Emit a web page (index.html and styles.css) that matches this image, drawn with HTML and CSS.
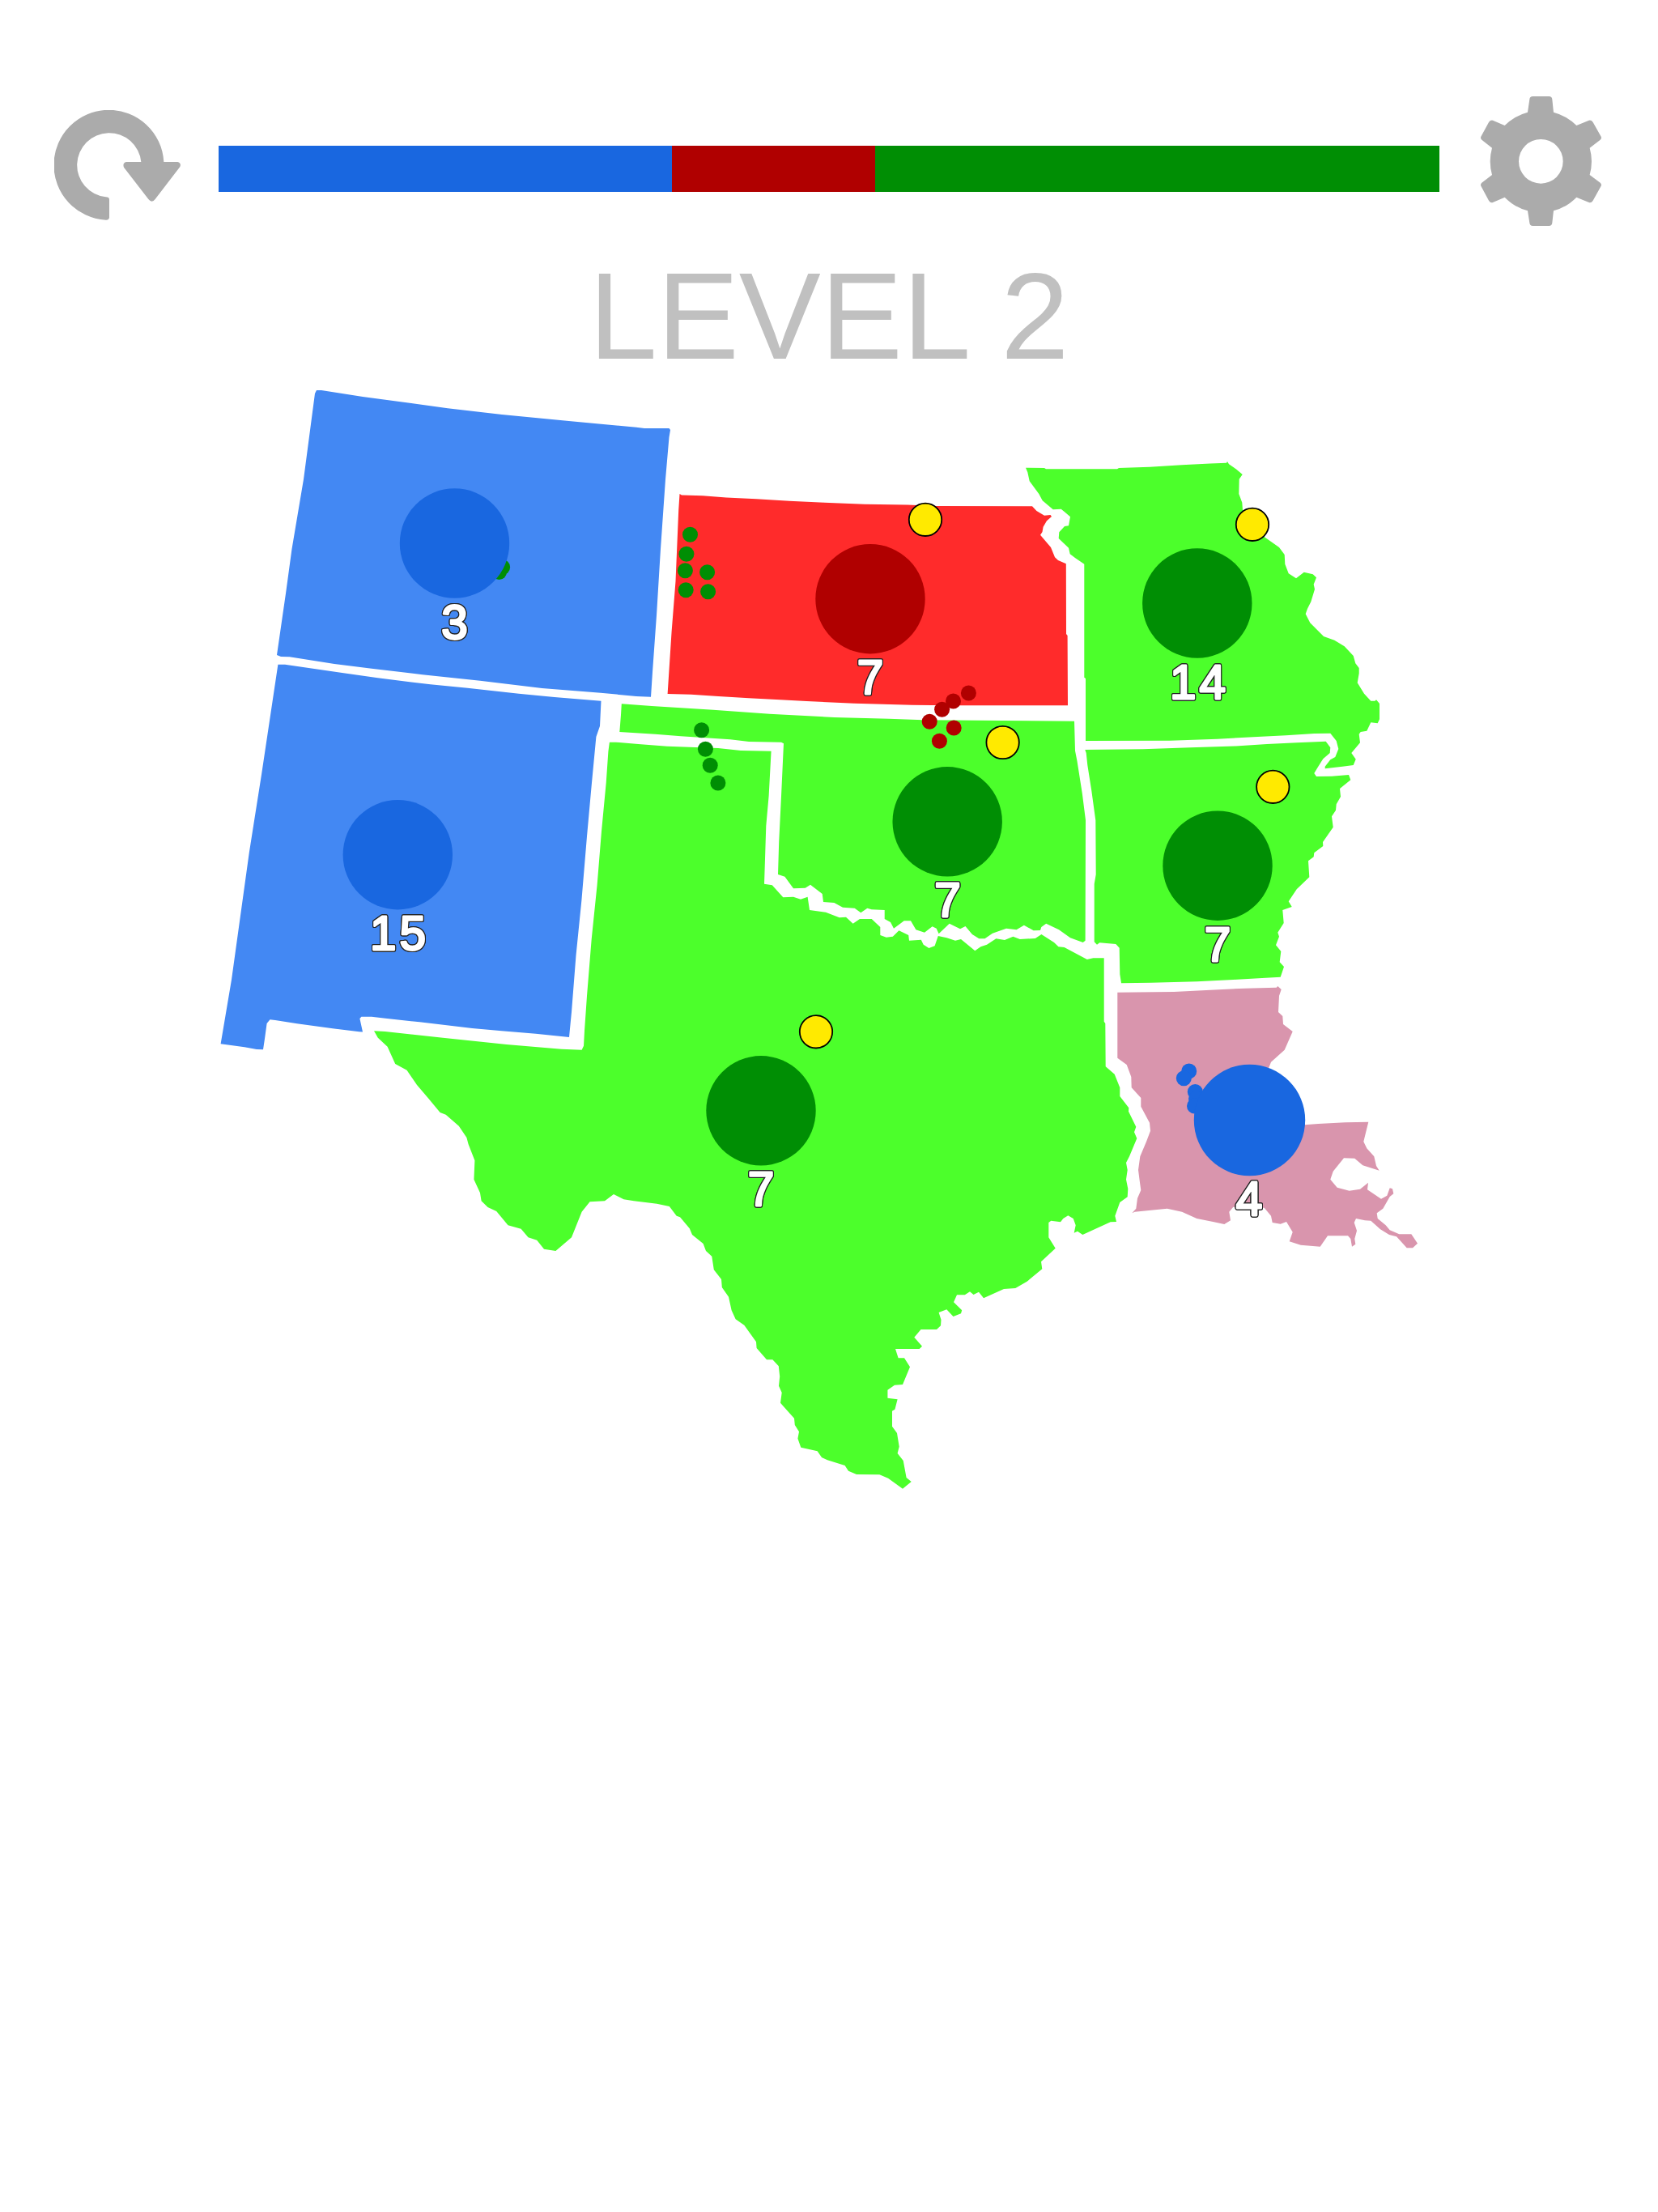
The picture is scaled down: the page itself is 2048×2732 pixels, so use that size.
FILE: index.html
```html
<!DOCTYPE html>
<html lang="en">
<head>
<meta charset="utf-8">
<title>Level 2</title>
<link rel="stylesheet" href="styles.css">
</head>
<body>
<header class="topbar">
  <button class="icon-button restart" aria-label="Restart">
    <svg viewBox="81 138 468 408" width="156" height="136"><path d="M272 545A204 204 0 1 1 487 330H538Q553 334 547 348L455 468Q443 484 430 468L339 350Q333 334 348 330H403A119 119 0 1 0 272 460Q285 460 285 470V536Q283 546 272 545Z"/></svg>
  </button>
  <div class="balance">
    <span class="share blue" style="flex-grow:560"></span>
    <span class="share red" style="flex-grow:251"></span>
    <span class="share green" style="flex-grow:697"></span>
  </div>
  <button class="icon-button settings" aria-label="Settings">
    <svg viewBox="387 87 447 480" width="149" height="160"><path fill-rule="evenodd" d="M561 146L568 98Q569 87 580 87H640Q651 87 652 98L657 146A187 187 0 0 1 742 195L788 176Q797 174 803 183L833 236Q836 243 830 248L791 278A187 187 0 0 1 791 378L830 407Q836 412 833 419L803 473Q797 483 788 480L742 461A187 187 0 0 1 657 511L652 556Q651 567 640 567H580Q569 567 568 556L561 511A187 187 0 0 1 476 461L432 480Q423 483 417 473L388 419Q385 412 391 407L429 378A187 187 0 0 1 429 278L391 248Q385 243 388 236L417 183Q423 174 432 176L476 195A187 187 0 0 1 561 146ZM692 328A82 82 0 1 0 528 328A82 82 0 1 0 692 328Z"/></svg>
  </button>
</header>
<h1 class="title">LEVEL 2</h1>
<svg class="map" viewBox="0 466 2048 2266" width="2048" height="2266">
  <g class="states">
    <path class="land-blue" d="M391 482L397 482L448 490L493 496L553 504.300L620 512L700 519.700L786 527.700L796 529L826.500 529L828 531L826.500 540L822 592L816 678L811 760L806 830L804 860.700L786 860L742 855.700L669.500 850L593 840.700L522 833.300L459 825.700L413 820L357.600 811.300L347 811L342 809L353 733L360.500 678L375 592L389 486Z"/>
    <path class="land-blue" d="M343.400 820.700L352 820.700L422.600 831L466.600 837.300L531.700 845.300L577.600 849.700L640.800 856.700L684.800 861L742.500 865.700L741 896.700L736.400 910L730.700 970L725 1033L718.400 1111.700L711.500 1180L706 1250L703 1281L661.800 1276.700L619.700 1273.300L583.300 1270L518.300 1262.300L476 1257.700L459 1255.700L446.400 1255.700L444.400 1258L448 1274.500L443.700 1274.300L411 1270.300L367 1264.300L340 1260L333.500 1259.300L329.600 1264L327 1283L325 1296.300L317 1296L302 1293.300L272.600 1289.300L286 1210L307.800 1053L323 956.700L336.500 866.700Z"/>
    <path class="land-red" d="M839.500 610L842 611.500L868 612.300L897 614.500L934 616.300L975 618.700L1018 620.700L1068 622.700L1121 623.500L1157 625L1275 625.300L1280.400 631L1290 636.700L1297.500 636L1299 638L1293 643.300L1288.600 650.700L1287.500 657L1285 660.700L1298 676L1303 688.300L1307 692L1316.800 696.300L1317 783L1318.600 785L1319 871.300H1175L1127 870.700L1055 868.700L996.400 866L959 864L925 862.300L887.500 860L853.600 857.700L824.600 857L829.600 780L834.500 718L838.200 630Z"/>
    <path class="land-green" d="M1267 577.700L1290 578L1292 579.300H1380L1382 578L1420 576.700L1460 574.300L1495 572.500L1515 571.700L1516 570L1518 573.300L1526.700 579.300L1534.700 586L1530.700 591.700L1530.300 610L1534.300 620.700L1535 630L1550 655L1563.300 664.300L1580 676L1586.700 685L1587.300 696.700L1591.700 708.300L1601 714.300L1610.700 706.700L1621.700 709.300L1626 713.300L1622.700 721.700L1624 727.700L1619.300 743.300L1615 751.700L1612.700 758.300L1618.300 769.300L1635 786L1648.300 790.700L1660.700 798.300L1671.700 810L1674.300 819.300L1678.700 825V831.700L1676.700 843.300L1685 856.700L1693.300 865.700H1698.300L1700 864.300L1704 869V888.300L1701.700 893.300L1693.300 892.300L1688.300 902.700L1680.700 904L1678.700 906.700L1680 917.300L1669.300 930L1674.700 937.700L1671.700 945L1658.300 946.700L1636.700 949.300V946.700L1643.300 938.300L1649.300 935L1653.300 925L1650.700 915L1643.300 905.700L1623.300 906L1588.300 908.300L1548.300 910.300L1503.300 912.700L1445 914.700L1341 915V838L1339.300 836.700V696.700L1328.300 689.300L1321.700 684.300L1320 676.700L1307.700 665L1308.300 657.300L1315 650L1320 649.300L1322 638.300L1315 632.300L1310.700 628.700L1300.700 629.300L1287.700 618.300L1283.300 610L1271.700 594.300L1269.300 583.300Z"/>
    <path class="land-green" d="M767.800 869.300L805 872L881 876.700L950.500 881.700L1030.400 886L1098 887.700L1140 889.300L1327 890.700L1328 927.300L1330.500 940L1336.800 980L1341 1013L1340.600 1161.700L1337.700 1164L1322 1158.300L1308 1148.300L1292.200 1140.700L1286.300 1145L1285 1149L1276.600 1149.300L1264.900 1142.700L1255.600 1148.300L1243 1146.700L1226 1152.700L1216.500 1159.300H1209.300L1200.900 1154L1192.500 1144L1186 1147.300L1172.700 1140.700L1159.600 1153.300L1156.700 1146.700L1151.600 1144.300L1142 1151.700L1131.400 1148.300L1125 1137.300H1116.700L1104 1146.700L1100 1139L1092.700 1135V1124L1076.700 1123.300L1071.300 1121.700L1063.300 1127.300L1055.700 1121.700L1041 1120.700L1030.400 1115L1017 1114L1015.700 1104L1001 1092.700L994.700 1096.700L980 1097.300L969.400 1082.700L961 1080L962.200 1040L965 983.300L968 918.300L965 916.700L925 916L902 913.300L841 909.300L809.500 906.700L765.300 904L767 883Z"/>
    <path class="land-green" d="M752.900 916.700H761L788.400 919L824 921.700L887 924L915 927L952.600 927.700L949.600 983.300L946.300 1020L944 1091.700L953.800 1093.300L967.300 1108.300L980 1107.700L989 1110.700L997.600 1107.700L1000 1124L1020 1126.700L1036.800 1133.300L1045 1132.700L1053.600 1140.700L1062 1135H1076.700L1087.300 1145V1155L1094.800 1157.700L1102.800 1156.700L1110.400 1149.300L1122.200 1155L1123 1161.700L1137.800 1160.700L1140.700 1166.700L1147.400 1171L1154.600 1168.300L1158.800 1156L1169.400 1158.300L1180 1161.700L1187 1160L1204.300 1174.300L1211.400 1169.300L1219 1166.700L1230.400 1159.300L1241 1161L1251.400 1156.700L1259.800 1160L1278.800 1159L1286.400 1154L1302 1164L1307.400 1169.300L1314.600 1170L1342.800 1185L1350.400 1183.300H1363.700V1261.700L1365.300 1264L1365.700 1317.300L1376.700 1326.700L1383.300 1343.300V1354L1394.300 1368.300L1394 1372.700L1403.300 1391.700L1401 1398.300L1404.300 1406L1395 1428.300L1391 1436L1392.700 1445L1391 1456.700L1393.300 1468.300L1392.700 1478.300L1383.300 1485L1377.300 1501.700L1379 1509L1371.700 1509.300L1337.300 1525L1331 1520.700L1326.700 1522.700L1328.700 1513.300L1325.700 1505L1319.300 1501.300L1313.300 1505L1310 1509.300L1298.300 1507.700L1295.300 1510V1528.300L1303.700 1541.700L1286 1558.300L1287.300 1567.300L1268.600 1582.700L1254.300 1591L1240 1592L1215 1603.300L1209 1595.700L1202.500 1599L1198 1595.300L1191.800 1599.300H1182L1178 1608.300L1188.200 1618.300L1187 1622.300L1177.500 1626L1169.300 1617.300L1159.600 1621L1162.500 1630L1162 1637.300L1157 1642H1137.500L1129.300 1651.700L1139 1662.700L1135.700 1666H1106L1109.600 1677.300H1117L1124 1688.300L1115 1710L1105 1710.700L1096.400 1716.700V1726.700L1108.600 1728.300L1105.400 1740.700L1102 1742.700V1761.700L1108 1770L1110.700 1786.700L1108.600 1795L1115.700 1804L1119.600 1825L1125.700 1830L1115 1838.700L1097 1825.700L1086.400 1821.300L1058 1821L1048 1816.700L1043.600 1810L1022 1803.300L1015 1800L1009.600 1792.300L989.300 1787.700L985.400 1776.700L987 1768.300L981.800 1760L981 1751.700L972 1741.700L964 1732.700L965.700 1720L962 1711.700L963.200 1700L961.800 1687.300L954.300 1679.300H947L934.600 1665L934 1657.300L919.300 1636.700L908.600 1629.300L903.600 1618.300L900 1601.700L891.800 1590L891 1580L881.800 1568.300L879.300 1551.700L872 1545L868.600 1536L855 1525L851.800 1517.300L840 1503.300L835.700 1501.700L826.800 1490L811.400 1486.700L783 1483.300L770.400 1481.300L758 1475L747 1483.300L728.600 1484.300L718.600 1496.700L706 1528.300L686.400 1545L672 1542.700L663.200 1531.700L652.500 1528.300L643.600 1517.700L627.500 1513.300L613.200 1496L602.500 1491L594.600 1483.300L593 1473.300L585.400 1456.700L586.400 1433.300L578.600 1413.300L576.400 1405L566.800 1390.700L550.700 1376.700L543.600 1374L529.300 1356.700L515 1340L502.500 1321.700L488.200 1314L478.600 1292.700L466.800 1281.700L462 1273.300L475.700 1274L547 1281.700L625.700 1290L693.600 1295.700L718.600 1296.700L721 1291.700L722 1273L725 1230L730.700 1160L737.600 1093L743 1026.700L748.700 966.700L751.400 928Z"/>
    <path class="land-green" d="M1340.300 926L1411.700 925.300L1470 923.300L1526.700 921.500L1565 919L1601.700 917.300L1637.700 915.700L1643.300 923.300L1642.700 930L1634.300 937.300L1628.300 946.700L1623.300 955L1626 959L1645 958.700L1666 957L1668.300 963.300L1655 974L1656 984L1650.700 993.300L1650 1000.700L1645 1008.300L1646.700 1021.700L1634 1040L1634.300 1045L1623.300 1053.300L1622.700 1058.300L1616 1063.300L1617.300 1083.300L1601.700 1098.300L1591.700 1113.300L1595.700 1120L1584.300 1124L1585.700 1140L1578.300 1151.700L1580 1156.700L1576 1167.300L1582.300 1175L1580.700 1188.300L1586 1194L1581.700 1206.700L1563.300 1207.700L1523.300 1210L1478.300 1212.300L1421.700 1213.700L1385 1214.300L1383.300 1203.300L1382.700 1170.700L1378.300 1166L1358.300 1164.300L1355 1166.700L1351.700 1163.300V1091.700L1353.700 1080L1353.300 1013.300L1348.300 976.700L1343.300 945L1341.700 930Z"/>
    <path class="land-pink" d="M1380.300 1225.700L1450 1225L1495 1222.700L1538.300 1220.700L1576.700 1219.700L1578.300 1218L1582.700 1222L1580 1230L1579 1250L1584.300 1255L1585 1265L1596.700 1274L1586.700 1296.700L1570 1311.700L1566 1322L1580 1389L1611.700 1389.300L1628.300 1388L1661.700 1386.300L1690.300 1385.700L1684.300 1410L1688.300 1418.300L1697.300 1428.300L1700 1440L1703.700 1445.700L1683.300 1439.300L1673.300 1430.700L1660 1430.300L1646.700 1446.700L1643.300 1456.700L1651.700 1466.700L1666.700 1470.700L1680 1468.700L1690 1460.700L1689 1469.300L1706 1480.700L1713.300 1476.700L1716.700 1467.300L1720 1468.300L1721.300 1474.300L1716.700 1478L1708.300 1492.700L1700.700 1498.300L1701.700 1505L1711.700 1513.300L1716.700 1519.300L1728.300 1524.300H1743.300L1751 1535.700L1745 1541.300H1737.700L1725 1527.300L1716 1525L1705 1518.300L1693.300 1507.700L1686 1507.300L1675 1505L1672.700 1510L1676 1520L1673.300 1530L1674.300 1536.700L1670 1539.700L1668.300 1530L1665 1526.300H1640L1630.700 1539.700L1606.700 1537.700L1592.700 1533.300L1596.700 1521.700L1589 1509L1581.700 1511.700L1571.700 1510L1570 1501.700L1561.700 1491.700L1523.300 1490.700L1518.300 1496.700L1520 1507.300L1512.300 1512L1498.300 1509L1478.300 1505L1460 1496.700L1441.700 1492.700L1401.700 1496.700L1398.300 1498.300L1403.300 1492.700L1405 1480L1409.300 1470L1407.700 1458.300L1406 1445L1408.300 1428.300L1416 1410L1421 1396.700L1420 1386.700L1409.300 1366.700V1356L1397.700 1343.300L1397.300 1330L1391.700 1315L1380.300 1306.700Z"/>
  </g>
  <g class="green">
    <circle cx="620.600" cy="700.500" r="9.500"/><circle cx="616.500" cy="706.500" r="9.500"/>
    <circle cx="852.500" cy="660.300" r="9.500"/><circle cx="847.900" cy="684.300" r="9.500"/>
    <circle cx="846.400" cy="704.700" r="9.500"/><circle cx="873.600" cy="706.700" r="9.500"/>
    <circle cx="847.200" cy="728.700" r="9.500"/><circle cx="874.600" cy="730.700" r="9.500"/>
    <circle cx="866.600" cy="901.700" r="9.500"/><circle cx="871.400" cy="925.300" r="9.500"/>
    <circle cx="877.200" cy="945.300" r="9.500"/><circle cx="886.900" cy="967" r="9.500"/>
  </g>
  <g class="red">
    <circle cx="1196.400" cy="856" r="9.500"/><circle cx="1177.500" cy="866" r="9.500"/><circle cx="1163.600" cy="876.300" r="9.500"/>
    <circle cx="1148.200" cy="891.300" r="9.500"/><circle cx="1178.200" cy="899" r="9.500"/><circle cx="1160.400" cy="915.300" r="9.500"/>
  </g>
  <g class="blue">
    <circle cx="1468.700" cy="1323" r="9.500"/><circle cx="1462.300" cy="1331.700" r="9.500"/>
    <circle cx="1476.300" cy="1348.500" r="9.500"/><circle cx="1477.500" cy="1357" r="9.500"/><circle cx="1475.500" cy="1366" r="9.500"/>
    <circle cx="561.500" cy="671" r="67.700"/>
    <circle cx="491.300" cy="1055.700" r="67.700"/>
    <circle cx="1543.500" cy="1383.500" r="68.700"/>
  </g>
  <circle class="red" cx="1075" cy="739.700" r="67.700"/>
  <g class="green">
    <circle cx="1478.800" cy="745" r="67.700"/>
    <circle cx="1170.200" cy="1014.800" r="67.700"/>
    <circle cx="1504" cy="1069.200" r="67.700"/>
    <circle cx="940" cy="1371.800" r="67.700"/>
  </g>
  <g class="coins">
    <circle cx="1143" cy="641.800" r="20.200"/>
    <circle cx="1547" cy="647.800" r="20.200"/>
    <circle cx="1238.600" cy="917" r="20.200"/>
    <circle cx="1572.300" cy="971.800" r="20.200"/>
    <circle cx="1008" cy="1274.300" r="20.200"/>
  </g>
  <g class="counts">
    <text x="563.500" y="788.500">3</text>
    <text x="493.500" y="1173">15</text>
    <text x="1077" y="856.500">7</text>
    <text x="1481.500" y="862.500">14</text>
    <text x="1172.500" y="1131.500">7</text>
    <text x="1506" y="1186.500">7</text>
    <text x="942" y="1489">7</text>
    <text x="1545" y="1501">4</text>
  </g>
</svg>
</body>
</html>
```
FILE: styles.css
```css
body {
  margin: 0;
  background: #fff;
  font-family: "Liberation Sans", Arial, sans-serif;
}

.topbar {
  display: flex;
  align-items: flex-start;
  height: 160px;
  padding: 119px 70px 0 67px;
}

.icon-button {
  flex: none;
  padding: 0;
  border: 0;
  background: none;
}

.icon-button svg {
  display: block;
  fill: #ababab;
}

.restart {
  margin-top: 17px;
}

.balance {
  display: flex;
  flex: 1;
  height: 57px;
  margin: 61px 51px 0 47px;
}

.share {
  flex: 1 1 0;
}

.blue {
  fill: #1967e0;
  background: #1967e0;
}

.red {
  fill: #b00000;
  background: #b00000;
}

.green {
  fill: #008e04;
  background: #008e04;
}

.title {
  margin: 37px 0 0;
  color: #c0c0c0;
  font-size: 151.5px;
  font-weight: 400;
  line-height: 150px;
  text-align: center;
  font-kerning: none;
  word-spacing: -5px;
}

.map {
  display: block;
}

.land-blue {
  fill: #4388f3;
}

.land-red {
  fill: #ff2b2b;
}

.land-green {
  fill: #4cff2b;
}

.land-pink {
  fill: #d995ad;
}

.coins {
  fill: #ffea00;
  stroke: #000;
  stroke-width: 1.8px;
}

.counts {
  fill: #fff;
  stroke: #fff;
  stroke-width: 2.8px;
  stroke-linejoin: round;
  font-size: 58.5px;
  font-weight: 400;
  letter-spacing: 4px;
  text-anchor: middle;
  filter: drop-shadow(1px 0 0 #222) drop-shadow(-1px 0 0 #222) drop-shadow(0 1px 0 #222) drop-shadow(0 -1px 0 #222);
}
```
